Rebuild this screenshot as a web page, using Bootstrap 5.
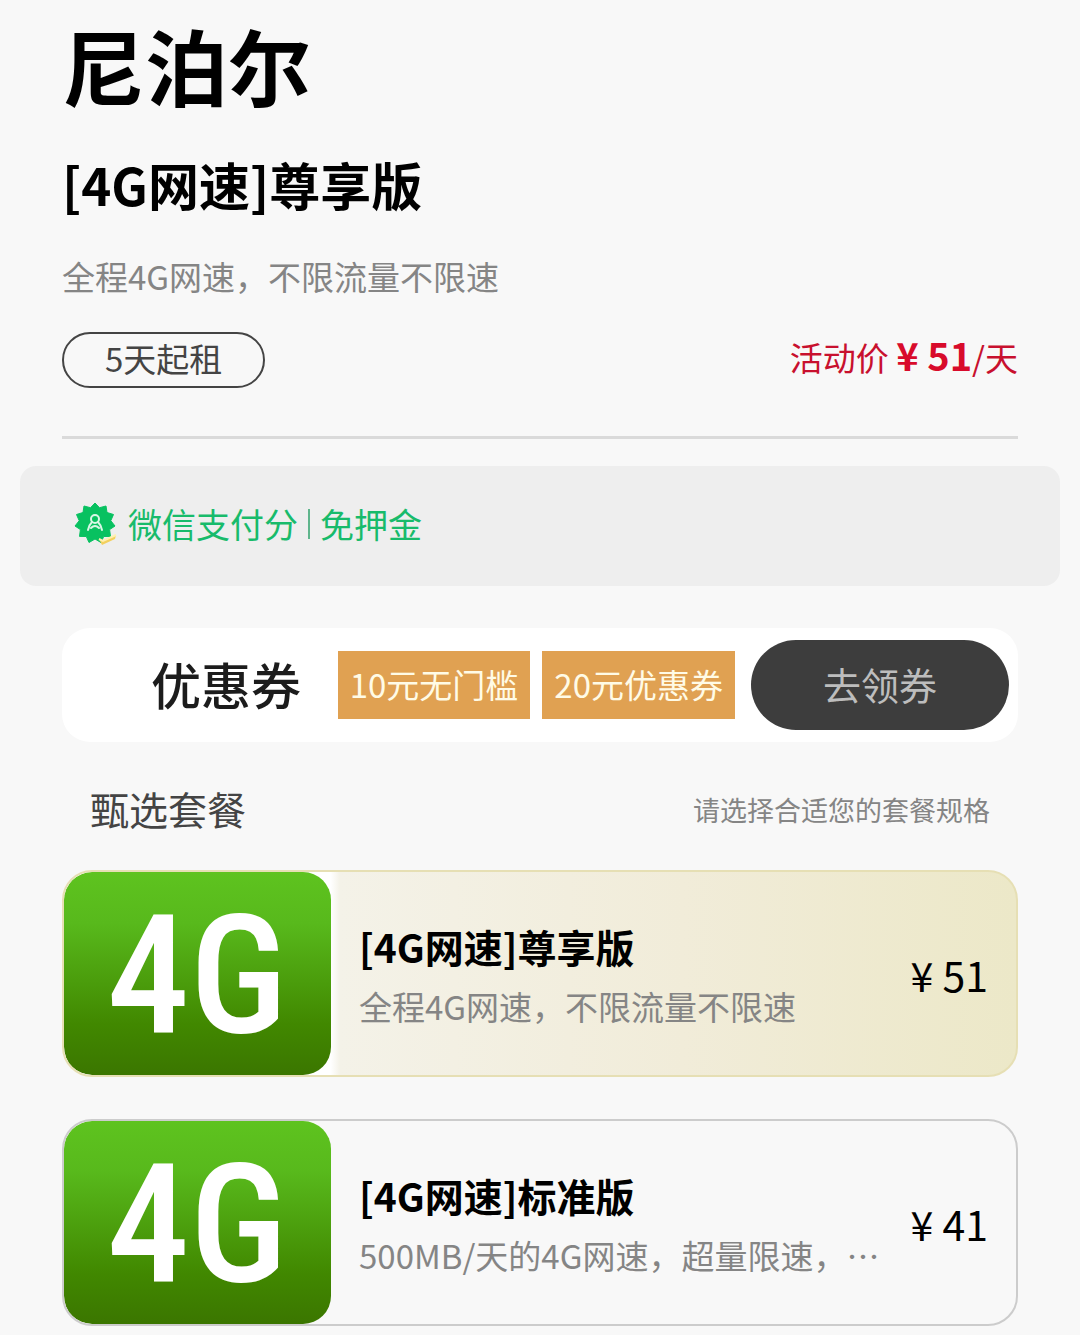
<!DOCTYPE html>
<html lang="zh-CN">
<head>
<meta charset="utf-8">
<meta name="viewport" content="width=device-width, initial-scale=1">
<title>尼泊尔 · 4G网速套餐</title>
<link href="https://cdn.jsdelivr.net/npm/bootstrap@5.3.0/dist/css/bootstrap.min.css" rel="stylesheet">
<style>
  body { background: #f8f8f8; color: #000; font-family: "Noto Sans CJK SC", sans-serif; font-size: 33px; line-height: 48px; }
  .page-inner { padding: 0 62px; }
  .page-title { font-size: 83px; line-height: 120px; font-weight: 700; }
  .plan-title { font-size: 51px; line-height: 72px; font-weight: 700; }
  .muted-text { color: #858585; }
  .rent-pill { border: 2px solid #444; color: #444; padding: 0 41px 4px; }
  .deal { color: #c8102e; margin-top: -8px; }
  .deal strong { font-size: 38px; color: #d80b2b; }
  .rule { height: 3px; background: #dadada; }
  .pay-strip { margin: 27px 20px 42px; padding: 34px 54px 38px; background: #eee; border-radius: 16px; color: #18bb6b; font-size: 34px; gap: 10px; }
  .pay-sep { width: 2px; height: 30px; background: #5fb58c; }
  .coupon-bar { background: #fff; border-radius: 28px; padding: 12px 9px 12px 89px; }
  .coupon-name { font-size: 50px; line-height: 68px; padding-bottom: 4px; font-weight: 500; color: #1c1c1c; }
  .coupon-tags { gap: 12px; }
  .coupon-tag { background: #e0a152; color: #fffbe6; padding: 9px 12px 11px; }
  .btn-claim { background: #3d3d3d; color: #bdbdbd; font-size: 38px; line-height: 56px; padding: 16px 72px 18px; }
  .btn-claim:hover { background: #2d2d2d; color: #fff; }
  .section-head { margin: 40px 0 32px; padding: 0 28px; }
  .section-name { font-size: 39px; line-height: 52px; padding-bottom: 4px; color: #444; }
  .section-hint { font-size: 27px; color: #858585; }
  .plan-list { display: grid; gap: 42px; }
  .plan-card { border: 2px solid #ccc; border-radius: 30px; overflow: hidden; padding-right: 28px; cursor: pointer; }
  .btn-check:checked + .plan-card { border-color: #e6dfb4; background: linear-gradient(90deg, #fff 28%, #f4f2e8 29%, #f1ecd9 65%, #ece8c8); }
  .plan-text { margin-left: 28px; }
  .thumb { width: 267px; height: 203px; border-radius: 28px; background: linear-gradient(#5ec31f, #58b91c 25%, #418800 75%, #3b7600); }
  .thumb text { font-family: "Roboto Condensed", "Liberation Sans Narrow", sans-serif; font-weight: 500; font-size: 166px; fill: #fff; }
  .plan-name { font-size: 39px; line-height: 56px; padding-bottom: 8px; font-weight: 700; }
  .plan-price { font-size: 41px; line-height: 60px; }
</style>
</head>
<body>
<main class="pb-2">
  <header class="page-inner">
    <h1 class="page-title m-0 pt-1">尼泊尔</h1>
    <h2 class="plan-title m-0 mt-4">[4G网速]尊享版</h2>
    <p class="muted-text m-0 mt-4 pt-2">全程4G网速，不限流量不限速</p>
    <div class="d-flex justify-content-between align-items-center mt-4 pt-2">
      <span class="rent-pill rounded-pill">5天起租</span>
      <span class="deal">活动价 <strong>¥ 51</strong>/天</span>
    </div>
    <div class="rule mt-5"></div>
  </header>

  <section class="pay-strip d-flex align-items-center">
    <svg width="44" height="44" viewBox="0 0 44 44" aria-hidden="true">
      <path fill="#08c160" stroke="#08c160" stroke-linejoin="round" d="M21 1L25.500 5.700 32 4 33 10.500 39.500 12.500 36.800 18.700 41 24 35.600 27.600 36.500 34.400 29.700 34.500 27 40.500 21 37 15 40.500 12.300 34.500 5.500 34.400 6.400 27.600 1 24 5.200 18.700 2.500 12.500 9 10.500 10 4 16.500 5.700z"/>
      <path d="M25 37l4 2 13-6-1 4-13 6z" fill="#f3d05e"/>
      <path d="M25 37l4 2 13-6" fill="none" stroke="#fff0b0" stroke-width="2"/>
      <circle cx="21" cy="17" r="4" fill="none" stroke="#d9f7e6" stroke-width="2"/>
      <path d="M14 28q1-5 4-8m6 0q3 3 4 8M17 26q4-4 8 0" fill="none" stroke="#d9f7e6" stroke-width="2" stroke-linecap="round" stroke-linejoin="round"/>
    </svg>
    <span>微信支付分</span><span class="pay-sep"></span><span>免押金</span>
  </section>

  <div class="page-inner">
    <section class="coupon-bar d-flex align-items-center justify-content-between">
      <span class="coupon-name">优惠券</span>
      <div class="d-flex align-items-center gap-3">
        <div class="coupon-tags d-flex">
          <span class="coupon-tag">10元无门槛</span>
          <span class="coupon-tag">20元优惠券</span>
        </div>
        <button type="button" class="btn btn-claim rounded-pill border-0">去领券</button>
      </div>
    </section>

    <div class="section-head d-flex align-items-center justify-content-between">
      <h3 class="section-name fw-normal m-0">甄选套餐</h3>
      <span class="section-hint">请选择合适您的套餐规格</span>
    </div>

    <div class="plan-list">
      <div>
        <input class="btn-check" type="radio" name="plan" id="plan-premium" checked>
        <label class="plan-card d-flex align-items-center" for="plan-premium">
          <svg class="thumb flex-shrink-0" viewBox="0 0 267 203" role="img" aria-label="4G"><text x="133" y="160" text-anchor="middle">4G</text></svg>
          <span class="plan-text flex-grow-1 overflow-hidden">
            <span class="plan-name d-block">[4G网速]尊享版</span>
            <span class="muted-text d-block text-truncate">全程4G网速，不限流量不限速</span>
          </span>
          <span class="plan-price flex-shrink-0 ms-3">¥ 51</span>
        </label>
      </div>
      <div>
        <input class="btn-check" type="radio" name="plan" id="plan-standard">
        <label class="plan-card d-flex align-items-center" for="plan-standard">
          <svg class="thumb flex-shrink-0" viewBox="0 0 267 203" role="img" aria-label="4G"><text x="133" y="160" text-anchor="middle">4G</text></svg>
          <span class="plan-text flex-grow-1 overflow-hidden">
            <span class="plan-name d-block">[4G网速]标准版</span>
            <span class="muted-text d-block text-truncate">500MB/天的4G网速，超量限速，⋯</span>
          </span>
          <span class="plan-price flex-shrink-0 ms-3">¥ 41</span>
        </label>
      </div>
    </div>
  </div>
</main>
<script src="https://cdn.jsdelivr.net/npm/bootstrap@5.3.0/dist/js/bootstrap.bundle.min.js"></script>
</body>
</html>
